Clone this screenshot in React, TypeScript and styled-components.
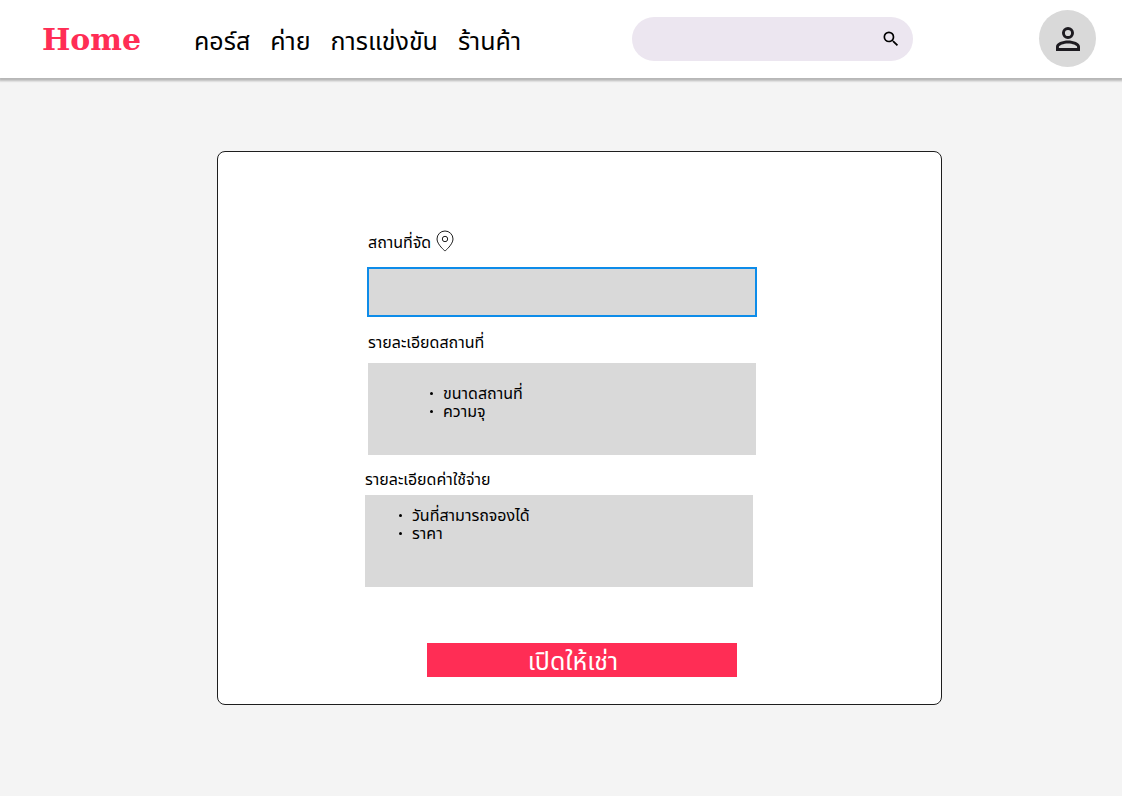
import React from 'react';
import styled, { createGlobalStyle } from 'styled-components';

const accent = '#ff2d55';
const panelGrey = '#d9d9d9';

const GlobalStyle = createGlobalStyle`
  * { box-sizing: border-box; }
  body {
    margin: 0;
    background: #f4f4f4;
    color: #000;
    font-family: "Noto Sans Thai", "Noto Sans", sans-serif;
    font-size: 16px;
    line-height: 18px;
  }
`;

const Header = styled.header`
  display: flex;
  align-items: center;
  height: 78px;
  padding: 0 26px 1px 42px;
  background: #fff;
  box-shadow: 0 2px 2px 1px rgba(0, 0, 0, 0.25);
`;

const Brand = styled.a`
  width: 152px;
  flex: none;
  padding-top: 3px;
  color: ${accent};
  font-family: "DejaVu Serif", "Liberation Serif", serif;
  font-size: 30px;
  font-weight: 700;
  line-height: 40px;
  text-decoration: none;
`;

const Nav = styled.nav`
  display: flex;
  flex: none;
  gap: 20px;
  width: 438px;
  padding-top: 7px;
`;

const NavLink = styled.a`
  color: #000;
  font-size: 25px;
  line-height: 36px;
  text-decoration: none;
  white-space: nowrap;
`;

const SearchBox = styled.form`
  display: flex;
  align-items: center;
  flex: 0 1 281px;
  min-width: 0;
  height: 44px;
  padding: 0 12px 0 20px;
  border-radius: 22px;
  background: #ece6f0;
`;

const SearchInput = styled.input`
  flex: 1;
  min-width: 0;
  border: 0;
  outline: 0;
  background: transparent;
  font: inherit;
`;

const IconButton = styled.button`
  display: flex;
  padding: 0;
  border: 0;
  background: transparent;
  cursor: pointer;
`;

const Avatar = styled.button`
  display: grid;
  place-items: center;
  flex: none;
  width: 57px;
  height: 57px;
  margin-left: auto;
  padding: 0;
  border: 0;
  border-radius: 50%;
  background: ${panelGrey};
  cursor: pointer;
`;

const Main = styled.main`
  padding: 73px 180px 91px 217px;
`;

const Card = styled.form`
  display: flex;
  flex-direction: column;
  padding: 78px 184px 27px 147px;
  border: 1px solid #1e1e1e;
  border-radius: 8px;
  background: #fff;
`;

const Field = styled.section<{ $inset?: boolean; $space: number }>`
  display: flex;
  flex-direction: column;
  margin-bottom: ${p => p.$space}px;
  padding: ${p => (p.$inset ? '0 1px 0 3px' : '0 4px 0 0')};
`;

const PlaceField = styled(Field)`
  padding: 0 0 0 2px;
`;

const LabelRow = styled.div`
  display: flex;
  align-items: center;
  gap: 5px;
  height: 22px;
  margin-bottom: 15px;
  padding-left: 1px;
`;

const PlaceLabel = styled.label`
  padding-top: 4px;
`;

const Title = styled.h2<{ $gap: number }>`
  margin: 0 0 ${p => p.$gap}px;
  font-size: 16px;
  font-weight: 400;
  line-height: 18px;
`;

const PlaceInput = styled.input`
  width: 100%;
  height: 50px;
  padding: 0 12px;
  border: 2px solid #0d8ce9;
  outline: 0;
  background: ${panelGrey};
  font: inherit;
`;

const Details = styled.ul<{ $top: number; $left: number }>`
  height: 92px;
  margin: 0;
  padding: ${p => p.$top}px 0 0 ${p => p.$left}px;
  background: ${panelGrey};
  list-style: none;
`;

const Detail = styled.li`
  display: flex;
  align-items: center;
  gap: 10px;

  &::before {
    content: "";
    width: 3px;
    height: 3px;
    margin-bottom: 2px;
    border-radius: 50%;
    background: #000;
  }
`;

const Submit = styled.button`
  height: 34px;
  margin: 0 20px 0 62px;
  padding: 4px 18px 0 0;
  border: 0;
  background: ${accent};
  color: #fff;
  font: inherit;
  font-size: 25px;
  line-height: 30px;
  cursor: pointer;
`;

const SearchIcon = () => (
  <svg width="20" height="20" viewBox="0 0 24 24" fill="#000" aria-hidden="true">
    <path d="M15.5 14h-.79l-.28-.27A6.47 6.47 0 0 0 16 9.5 6.5 6.5 0 1 0 9.5 16c1.61 0 3.09-.59 4.23-1.57l.27.28v.79l5 4.99L20.49 19l-4.99-5zm-6 0C7.01 14 5 11.99 5 9.5S7.01 5 9.5 5 14 7.01 14 9.5 11.99 14 9.5 14z" />
  </svg>
);

const PersonIcon = () => (
  <svg width="24" height="24" viewBox="0 0 24 24" fill="#1d1b20" aria-hidden="true">
    <path
      fillRule="evenodd"
      d="M12 0a6 6 0 1 1 0 12 6 6 0 0 1 0-12zm0 2.9a3.1 3.1 0 1 0 0 6.2 3.1 3.1 0 0 0 0-6.2zM0 24v-4.3c0-4 6.8-6.2 12-6.2s12 2.2 12 6.2V24zm2.9-2.9h18.2v-1.4c0-1.4-4.7-3.3-9.1-3.3s-9.1 1.9-9.1 3.3z"
    />
  </svg>
);

const PinIcon = () => (
  <svg width="18" height="22" viewBox="0 0 18 22" fill="none" stroke="#1e1e1e" aria-hidden="true">
    <path d="M17 9c0 5.5-8 12-8 12S1 14.5 1 9a8 8 0 0 1 16 0z" />
    <circle cx="9" cy="9" r="2.7" />
  </svg>
);

const links = ['คอร์ส', 'ค่าย', 'การแข่งขัน', 'ร้านค้า'];

export default function App() {
  return (
    <>
      <GlobalStyle />
      <Header>
        <Brand href="#">Home</Brand>
        <Nav>
          {links.map(link => (
            <NavLink href="#" key={link}>{link}</NavLink>
          ))}
        </Nav>
        <SearchBox role="search" onSubmit={e => e.preventDefault()}>
          <SearchInput type="search" aria-label="ค้นหา" />
          <IconButton type="submit" aria-label="ค้นหา"><SearchIcon /></IconButton>
        </SearchBox>
        <Avatar type="button" aria-label="บัญชี"><PersonIcon /></Avatar>
      </Header>
      <Main>
        <Card onSubmit={e => e.preventDefault()}>
          <PlaceField $space={17}>
            <LabelRow>
              <PlaceLabel htmlFor="place">สถานที่จัด</PlaceLabel>
              <PinIcon />
            </LabelRow>
            <PlaceInput id="place" type="text" />
          </PlaceField>
          <Field $inset $space={16}>
            <Title $gap={11}>รายละเอียดสถานที่</Title>
            <Details $top={22} $left={62}>
              <Detail>ขนาดสถานที่</Detail>
              <Detail>ความจุ</Detail>
            </Details>
          </Field>
          <Field $space={56}>
            <Title $gap={6}>รายละเอียดค่าใช้จ่าย</Title>
            <Details $top={12} $left={34}>
              <Detail>วันที่สามารถจองได้</Detail>
              <Detail>ราคา</Detail>
            </Details>
          </Field>
          <Submit type="submit">เปิดให้เช่า</Submit>
        </Card>
      </Main>
    </>
  );
}
